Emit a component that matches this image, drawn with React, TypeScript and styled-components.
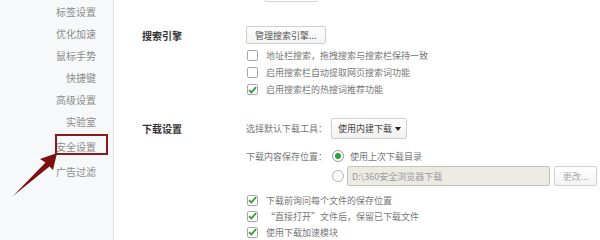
import styled, { createGlobalStyle } from "styled-components";

const GlobalStyle = createGlobalStyle`
  html, body {
    margin: 0;
    padding: 0;
    background: #ffffff;
    font-family: "Noto Sans CJK SC", "Noto Sans", sans-serif;
  }
`;

const Page = styled.div`
  position: relative;
  display: flex;
  width: 600px;
  height: 240px;
  overflow: hidden;
  background: #ffffff;
`;

const Sidebar = styled.div`
  width: 114px;
  flex-shrink: 0;
  background: #f7f8fa;
  border-right: 1px solid #e5e6e9;
  display: flex;
  flex-direction: column;
  align-items: flex-end;
  padding-right: 17px;
  box-sizing: border-box;
`;

const NavItem = styled.div<{ $tall?: boolean }>`
  height: ${(p) => (p.$tall ? "28px" : "22px")};
  display: flex;
  align-items: center;
  font-size: 10px;
  color: #8c8c8c;
  white-space: nowrap;
`;

const Main = styled.div`
  flex: 1;
  display: flex;
  flex-direction: column;
  padding-left: 28px;
`;

const Stub = styled.div`
  margin-left: 122px;
  width: 54px;
  height: 2px;
  border: 1px solid #d4d4d4;
  border-top: none;
  border-radius: 0 0 2px 2px;
  box-sizing: border-box;
`;

const Section = styled.div<{ $top: number }>`
  display: grid;
  grid-template-columns: 104px 1fr;
  margin-top: ${(p) => p.$top}px;
`;

const SectionLabel = styled.div<{ $h: number }>`
  height: ${(p) => p.$h}px;
  display: flex;
  align-items: center;
  font-size: 10px;
  font-weight: bold;
  color: #333;
  white-space: nowrap;
`;

const Content = styled.div`
  display: flex;
  flex-direction: column;
`;

const Button = styled.div<{ $muted?: boolean; $w?: number }>`
  height: 18px;
  ${(p) => (p.$w ? `width: ${p.$w}px;` : "padding: 0 8px;")}
  display: flex;
  align-items: center;
  justify-content: center;
  box-sizing: border-box;
  border: 1px solid #cfcfcf;
  border-radius: 2px;
  background: linear-gradient(#ffffff, #f3f3f3);
  font-size: 9px;
  color: ${(p) => (p.$muted ? "#a8a8a8" : "#555")};
  white-space: nowrap;
  align-self: flex-start;
`;

const OptionList = styled.div<{ $top: number }>`
  display: flex;
  flex-direction: column;
  margin-top: ${(p) => p.$top}px;
`;

const Option = styled.div<{ $h: number }>`
  height: ${(p) => p.$h}px;
  display: flex;
  align-items: center;
  gap: 8px;
  padding-left: 1px;
  font-size: 9px;
  color: #777;
  white-space: nowrap;
`;

const Box = styled.span`
  width: 11px;
  height: 11px;
  box-sizing: border-box;
  border: 1px solid #a9a9a9;
  border-radius: 2px;
  background: #fff;
  display: flex;
  align-items: center;
  justify-content: center;
  flex-shrink: 0;
`;

const Field = styled.div<{ $h: number; $top?: number; $indent?: boolean }>`
  height: ${(p) => p.$h}px;
  margin-top: ${(p) => p.$top ?? 0}px;
  display: flex;
  align-items: center;
  padding-left: ${(p) => (p.$indent ? "86px" : "0")};
  font-size: 9px;
  color: #777;
  white-space: nowrap;
`;

const FieldLabel = styled.span`
  width: 85px;
  flex-shrink: 0;
`;

const Select = styled.div`
  height: 21px;
  width: 76px;
  box-sizing: border-box;
  border: 1px solid #cfcfcf;
  border-radius: 2px;
  background: linear-gradient(#ffffff, #f2f2f2);
  display: flex;
  align-items: center;
  justify-content: space-between;
  padding: 0 5px 0 6px;
  color: #444;
  font-size: 9px;
`;

const Caret = styled.span`
  width: 0;
  height: 0;
  border-left: 3px solid transparent;
  border-right: 3px solid transparent;
  border-top: 4px solid #222;
`;

const Radio = styled.span<{ $on?: boolean }>`
  width: 12px;
  height: 12px;
  box-sizing: border-box;
  margin-left: 1px;
  border: 1px solid ${(p) => (p.$on ? "#9a9a9a" : "#b4b4b4")};
  border-radius: 50%;
  background: #fff;
  display: flex;
  align-items: center;
  justify-content: center;
  flex-shrink: 0;
  &::after {
    content: "";
    width: 6px;
    height: 6px;
    border-radius: 50%;
    background: ${(p) => (p.$on ? "#2ba52b" : "transparent")};
  }
`;

const RadioText = styled.span`
  margin-left: 6px;
`;

const PathInput = styled.div`
  margin-left: 3px;
  width: 203px;
  height: 20px;
  box-sizing: border-box;
  border: 1px solid #c4c4c0;
  border-radius: 2px;
  background: #ebebe4;
  display: flex;
  align-items: center;
  padding-left: 4px;
  color: #9a9a9a;
  font-size: 9px;
`;

const ChangeBtn = styled(Button)`
  height: 20px;
  margin-left: 4px;
`;

const Highlight = styled.div`
  position: absolute;
  left: 55px;
  top: 134px;
  width: 53px;
  height: 21px;
  box-sizing: border-box;
  border: 2px solid #8b1a1a;
`;

const Arrow = styled.svg`
  position: absolute;
  left: 0;
  top: 0;
`;

const Check = () => (
  <svg width="9" height="8" viewBox="0 0 9 8">
    <path d="M1 4.2 L3.4 6.5 L8 1.2" fill="none" stroke="#2f9e2f" strokeWidth="1.8" />
  </svg>
);

const CheckOption = ({ on, h, text }: { on?: boolean; h: number; text: string }) => (
  <Option $h={h}>
    <Box>{on && <Check />}</Box>
    <span>{text}</span>
  </Option>
);

export default function App() {
  return (
    <Page>
      <GlobalStyle />
      <Sidebar>
        <NavItem>标签设置</NavItem>
        <NavItem>优化加速</NavItem>
        <NavItem>鼠标手势</NavItem>
        <NavItem>快捷键</NavItem>
        <NavItem>高级设置</NavItem>
        <NavItem>实验室</NavItem>
        <NavItem $tall>安全设置</NavItem>
        <NavItem>广告过滤</NavItem>
      </Sidebar>
      <Main>
        <Stub />
        <Section $top={24}>
          <SectionLabel $h={18}>搜索引擎</SectionLabel>
          <Content>
            <Button>管理搜索引擎...</Button>
            <OptionList $top={3}>
              <CheckOption h={17} text="地址栏搜索，拖拽搜索与搜索栏保持一致" />
              <CheckOption h={17} text="启用搜索栏自动提取网页搜索词功能" />
              <CheckOption h={17} on text="启用搜索栏的热搜词推荐功能" />
            </OptionList>
          </Content>
        </Section>
        <Section $top={20}>
          <SectionLabel $h={21}>下载设置</SectionLabel>
          <Content>
            <Field $h={21}>
              <FieldLabel>选择默认下载工具：</FieldLabel>
              <Select>
                <span>使用内建下载</span>
                <Caret />
              </Select>
            </Field>
            <Field $h={20} $top={7}>
              <FieldLabel>下载内容保存位置：</FieldLabel>
              <Radio $on />
              <RadioText>使用上次下载目录</RadioText>
            </Field>
            <Field $h={20}>
              <FieldLabel />
              <Radio />
              <PathInput>D:\360安全浏览器下载</PathInput>
              <ChangeBtn $muted $w={43}>更改...</ChangeBtn>
            </Field>
            <OptionList $top={6}>
              <CheckOption h={16} on text="下载前询问每个文件的保存位置" />
              <CheckOption h={16} on text="“直接打开”文件后，保留已下载文件" />
              <CheckOption h={16} on text="使用下载加速模块" />
            </OptionList>
          </Content>
        </Section>
      </Main>
      <Highlight />
      <Arrow width="70" height="210" viewBox="0 0 70 210">
        <polygon points="57,153 53,170 49.5,166.5 13,196 45.5,162.5 40,159" fill="#7d1010" />
      </Arrow>
    </Page>
  );
}
